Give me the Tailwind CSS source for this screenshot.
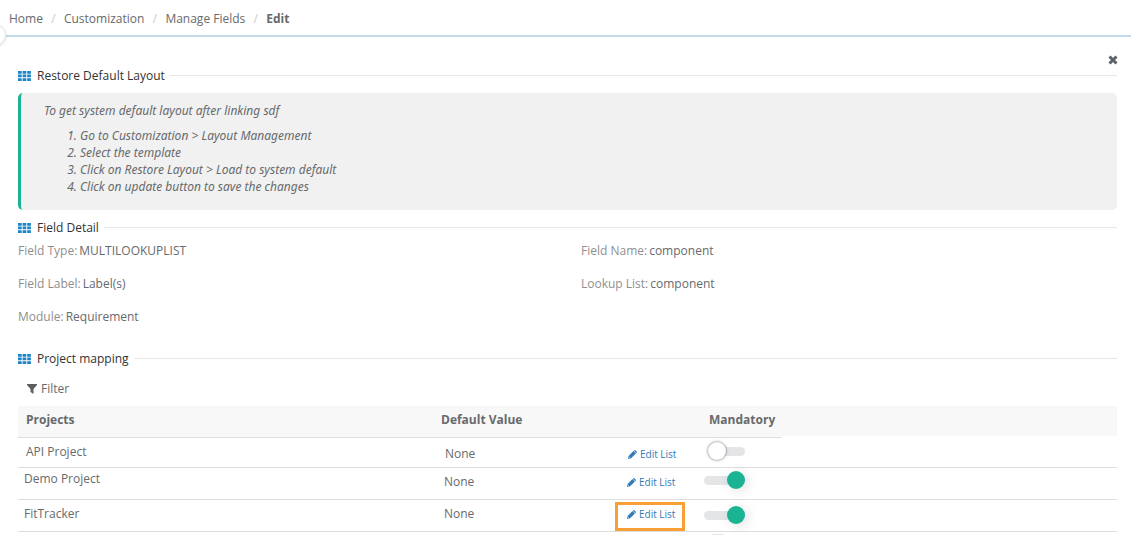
<!DOCTYPE html>
<html lang="en">
<head>
    <meta charset="UTF-8">
    <meta name="viewport" content="width=device-width, initial-scale=1.0">
    <title>Manage Fields - Edit</title>
    <script src="https://cdn.jsdelivr.net/npm/@tailwindcss/browser@4"></script>
</head>
<body class="bg-white font-['Open_Sans','Noto_Sans',sans-serif] text-[12px] leading-4 text-[#676a6c] overflow-hidden">
    <svg class="hidden">
        <symbol id="grid" viewBox="0 0 13 10">
            <path fill="#1c84c6" d="M0 0h3.700v2.700H0zM4.600 0h3.700v2.700H4.600zM9.200 0h3.700v2.700H9.200zM0 3.600h3.700v2.700H0zM4.600 3.600h3.700v2.700H4.600zM9.200 3.600h3.700v2.700H9.200zM0 7.200h3.700v2.700H0zM4.600 7.200h3.700v2.700H4.600zM9.200 7.200h3.700v2.700H9.200z"/>
        </symbol>
        <symbol id="pencil" viewBox="0 0 10 10">
            <path fill="currentColor" d="M0 10l.7-3.400L6 1.200 8.800 4 3.400 9.300zM6.600.7l.6-.5q.4-.4.900 0L9.800 1.900q.4.500 0 .9l-.6.700z"/>
            <path fill="#fff" d="M1.300 7.700l1 1-.7.200-.5-.5z"/>
        </symbol>
    </svg>

    <!-- Breadcrumb -->
    <header class="relative mr-[3px] h-[37px] border-b-2 border-[#c3dbe8]">
        <nav class="flex items-center pl-[9px] pt-[11px]">
            <a href="#">Home</a>
            <span class="w-[21px] text-center text-[#ccc]">/</span>
            <a href="#">Customization</a>
            <span class="w-[21px] text-center text-[#ccc]">/</span>
            <a href="#">Manage Fields</a>
            <span class="w-[21px] text-center text-[#ccc]">/</span>
            <span class="font-bold">Edit</span>
        </nav>
        <button class="absolute -left-[16px] top-[24px] size-[22px] rounded-full border border-[#e7e7e7] bg-white shadow-sm" aria-label="Toggle sidebar"></button>
    </header>

    <main class="pl-[18px] pr-[17px]">
        <div class="flex h-[30px] justify-end pt-[18px]">
            <button class="-mr-px size-[10px]" aria-label="Close">
                <svg class="size-[10px]" viewBox="0 0 10 10"><path stroke="#5c6368" stroke-width="3" d="M1.500 1.500l7 7M8.500 1.500l-7 7"/></svg>
            </button>
        </div>

        <section>
            <h2 class="flex h-[17px] items-center text-[#333]">
                <svg class="mr-[6px] h-[10px] w-[13px]"><use href="#grid"/></svg>
                Restore Default Layout
                <span class="ml-[5px] h-px flex-1 bg-[#e7e7e7]"></span>
            </h2>
            <div class="mt-[9px] rounded-[5px] border-l-[3px] border-[#1ab394] bg-[#f1f1f1] pl-[23px] pt-[10px] pb-[15px] font-['Noto_Sans',sans-serif] italic">
                <p class="mb-2">To get system default layout after linking sdf</p>
                <ol class="list-decimal pl-9 leading-[17px]">
                    <li>Go to Customization &gt; Layout Management</li>
                    <li>Select the template</li>
                    <li>Click on Restore Layout &gt; Load to system default</li>
                    <li>Click on update button to save the changes</li>
                </ol>
            </div>
        </section>

        <section class="mt-[9px]">
            <h2 class="flex h-[17px] items-center text-[#333]">
                <svg class="mr-[6px] h-[10px] w-[13px]"><use href="#grid"/></svg>
                Field Detail
                <span class="ml-[5px] h-px flex-1 bg-[#e7e7e7]"></span>
            </h2>
            <dl class="mt-[7px] grid grid-cols-[563px_1fr] gap-y-[17px]">
                <div class="flex gap-[2px]"><dt class="text-[#8f8f8f]">Field Type:</dt><dd>MULTILOOKUPLIST</dd></div>
                <div class="flex gap-[2px]"><dt class="text-[#8f8f8f]">Field Name:</dt><dd>component</dd></div>
                <div class="flex gap-[2px]"><dt class="text-[#8f8f8f]">Field Label:</dt><dd>Label(s)</dd></div>
                <div class="flex gap-[2px]"><dt class="text-[#8f8f8f]">Lookup List:</dt><dd>component</dd></div>
                <div class="flex gap-[2px]"><dt class="text-[#8f8f8f]">Module:</dt><dd>Requirement</dd></div>
            </dl>
        </section>

        <section class="mt-[25px]">
            <h2 class="flex h-[17px] items-center text-[#333]">
                <svg class="mr-[6px] h-[10px] w-[13px]"><use href="#grid"/></svg>
                Project mapping
                <span class="ml-[5px] h-px flex-1 bg-[#e7e7e7]"></span>
            </h2>
            <button class="ml-[9px] mt-[14px] flex items-center gap-1">
                <svg class="size-[10px]" viewBox="0 0 10 10"><path fill="#5c5f61" d="M0 0h10v1L6.500 5v5L3.500 8V5L0 1z"/></svg>
                Filter
            </button>

            <table class="mt-[9px] w-full table-fixed border-separate border-spacing-0 text-left">
                <colgroup>
                    <col class="w-[415px]"><col class="w-[164px]"><col class="w-[99px]"><col class="w-[85px]"><col>
                </colgroup>
                <thead>
                    <tr class="h-8 bg-[#f8f8f8]">
                        <th class="border-b border-[#ddd] pb-1 pl-2">Projects</th>
                        <th class="border-b border-[#ddd] pb-1 pl-2">Default Value</th>
                        <th class="border-b border-[#ddd]"></th>
                        <th class="border-b border-[#ddd] pb-1 pl-[13px]">Mandatory</th>
                        <th class="border-b-2 border-white"></th>
                    </tr>
                </thead>
                <tbody>
                    <tr class="h-[30px]">
                        <td class="border-b border-[#ddd] pb-[2px] pl-2">API Project</td>
                        <td class="border-b border-[#ddd] pt-[3px] pl-3">None</td>
                        <td class="border-b border-[#ddd] pt-[3px] pl-[31px]">
                            <button class="flex items-center gap-[3px] text-[10px] leading-3 text-[#337ab7]"><svg class="size-[9px]"><use href="#pencil"/></svg>Edit List</button>
                        </td>
                        <td class="border-b border-[#ddd] pb-[3px] pl-3">
                            <label class="relative block h-5 w-[37px]">
                                <input type="checkbox" aria-label="Mandatory for API Project" class="absolute inset-0 m-0 size-full opacity-0">
                                <span class="absolute left-0 top-[6px] h-[9px] w-full rounded-full bg-[#e4e5e7]"></span>
                                <span class="absolute left-0 top-px size-[18px] rounded-full bg-white shadow-[0_0_3px_rgba(0,0,0,0.6)]"></span>
                            </label>
                        </td>
                        <td class="border-b border-[#ddd]"></td>
                    </tr>
                    <tr class="h-8">
                        <td class="border-b border-[#ddd] pb-[10px] pl-[6px]">Demo Project</td>
                        <td class="border-b border-[#ddd] pb-[3px] pl-[11px]">None</td>
                        <td class="border-b border-[#ddd] pb-[3px] pl-[30px]">
                            <button class="flex items-center gap-[3px] text-[10px] leading-3 text-[#337ab7]"><svg class="size-[9px]"><use href="#pencil"/></svg>Edit List</button>
                        </td>
                        <td class="border-b border-[#ddd] pb-2 pl-2">
                            <label class="relative block h-5 w-[41px]">
                                <input type="checkbox" checked aria-label="Mandatory for Demo Project" class="absolute inset-0 m-0 size-full opacity-0">
                                <span class="absolute left-0 top-[6px] h-[9px] w-full rounded-full bg-[#e4e5e7]"></span>
                                <span class="absolute right-0 top-px size-[18px] rounded-full bg-[#1ab394] shadow-[3px_2px_12px_rgba(0,0,0,0.12)]"></span>
                            </label>
                        </td>
                        <td class="border-b border-[#ddd]"></td>
                    </tr>
                    <tr class="h-8">
                        <td class="border-b border-[#ddd] pb-[3px] pl-[6px]">FitTracker</td>
                        <td class="border-b border-[#ddd] pb-[3px] pl-[11px]">None</td>
                        <td class="relative border-b border-[#ddd] pb-[3px] pl-[30px]">
                            <button class="flex items-center gap-[3px] text-[10px] leading-3 text-[#337ab7]"><svg class="size-[9px]"><use href="#pencil"/></svg>Edit List</button>
                            <span class="pointer-events-none absolute left-[18px] top-[2px] h-[29px] w-[70px] border-[3px] border-[#fa9f36]"></span>
                        </td>
                        <td class="border-b border-[#ddd] pb-[2px] pl-2">
                            <label class="relative block h-5 w-[41px]">
                                <input type="checkbox" checked aria-label="Mandatory for FitTracker" class="absolute inset-0 m-0 size-full opacity-0">
                                <span class="absolute left-0 top-[6px] h-[9px] w-full rounded-full bg-[#e4e5e7]"></span>
                                <span class="absolute right-0 top-px size-[18px] rounded-full bg-[#1ab394] shadow-[3px_2px_12px_rgba(0,0,0,0.12)]"></span>
                            </label>
                        </td>
                        <td class="border-b border-[#ddd]"></td>
                    </tr>
                </tbody>
            </table>
            <!-- Top edge of the next row's toggle -->
            <div class="ml-[694px] mt-[2px] h-px w-3 rounded-full bg-[#e4e5e7]"></div>
        </section>
    </main>
</body>
</html>
